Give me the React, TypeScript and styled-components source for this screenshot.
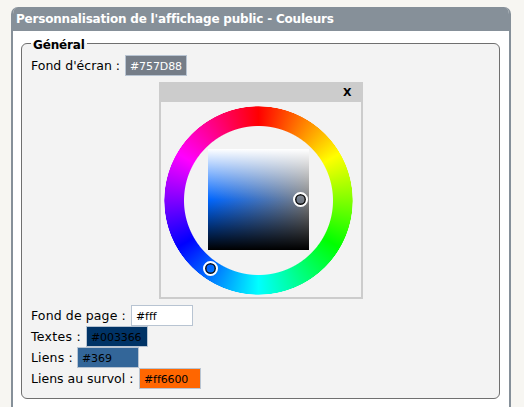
import React from "react";
import styled, { createGlobalStyle } from "styled-components";

const GlobalStyle = createGlobalStyle`
  * { box-sizing: border-box; }
  body {
    margin: 0;
    background: #f7f6f2;
    font-family: "DejaVu Sans", Verdana, sans-serif;
    font-size: 12.5px;
    color: #000;
  }
`;

const Page = styled.main`
  height: 407px;
  padding: 7px 13px 0 11px;
  overflow: hidden;
`;

const Panel = styled.section`
  height: 420px;
  border: 2px solid #869099;
  border-top: 0;
  border-radius: 7px 7px 0 0;
  background: #fff;
  overflow: hidden;
`;

const PanelTitle = styled.h1`
  height: 24px;
  margin: 0;
  padding-left: 3px;
  background: #869099;
  color: #fff;
  font-size: 12px;
  line-height: 25px;
  letter-spacing: -0.2px;
  white-space: nowrap;
`;

const Group = styled.fieldset`
  height: 362px;
  margin: 6px 9px 0 8px;
  padding: 5px 9px 0;
  border: 1px solid #6f6f6f;
  border-radius: 6px;
  background: #f3f3f3;
`;

const Legend = styled.legend`
  height: 13px;
  margin-left: 0;
  padding: 0 2px;
  font-size: 12px;
  font-weight: bold;
  line-height: 16px;
  letter-spacing: -0.15px;
`;

const Field = styled.div`
  display: flex;
  height: 21px;
`;

const Label = styled.label<{ $width: number; $spacing?: number }>`
  width: ${(p) => p.$width}px;
  flex: none;
  line-height: 21px;
  letter-spacing: ${(p) => p.$spacing ?? 0}px;
  white-space: nowrap;
`;

const ColorInput = styled.input<{ $bg: string; $fg?: string }>`
  width: 62px;
  height: 21px;
  margin: 0;
  padding: 1px 4px 0;
  border: 1px solid #b8c4d2;
  border-radius: 0;
  background: ${(p) => p.$bg};
  color: ${(p) => p.$fg ?? "#000"};
  font-family: "DejaVu Sans", Verdana, sans-serif;
  font-size: 11px;
  letter-spacing: -0.1px;
  outline: 0;
`;

const Picker = styled.div`
  width: 204px;
  height: 217px;
  margin: 6px 0 6px 128px;
  border: 2px solid #ccc;
  border-top: 0;
`;

const PickerBar = styled.div`
  display: flex;
  justify-content: flex-end;
  height: 20px;
  padding-right: 10px;
  background: #ccc;
`;

const CloseButton = styled.button`
  width: 8px;
  padding: 0;
  border: 0;
  background: none;
  font: bold 11px/19px "DejaVu Sans", Verdana, sans-serif;
  color: #000;
`;

const Wheel = styled.div`
  position: relative;
  display: grid;
  place-items: center;
  width: 189px;
  height: 189px;
  margin: 4px 0 0 3px;

  &::before {
    content: "";
    position: absolute;
    inset: 0;
    border-radius: 50%;
    background: conic-gradient(#f00, #ff0, #0f0, #0ff, #00f, #f0f, #f00);
    mask: radial-gradient(circle, transparent 74px, #000 75px, #000 93.8px, transparent 94.5px);
  }
`;

const Shade = styled.div`
  width: 101px;
  height: 101px;
  margin-bottom: 2px;
  background:
    linear-gradient(#fff, rgba(255, 255, 255, 0) 50%, rgba(0, 0, 0, 0) 50%, #000),
    linear-gradient(90deg, rgba(128, 128, 128, 0), #808080),
    #0066ff;
`;

const Marker = styled.span<{ $x: number; $y: number }>`
  position: absolute;
  left: ${(p) => p.$x - 7.5}px;
  top: ${(p) => p.$y - 7.5}px;
  width: 15px;
  height: 15px;
  border: 2px solid #fff;
  border-radius: 50%;
  box-shadow: inset 0 0 0 1.5px #111;
`;

export default function App() {
  return (
    <>
      <GlobalStyle />
      <Page>
        <Panel>
          <PanelTitle>Personnalisation de l'affichage public - Couleurs</PanelTitle>
          <Group>
            <Legend>Général</Legend>
            <Field>
              <Label $width={94} htmlFor="screen">Fond d'écran :</Label>
              <ColorInput id="screen" $bg="#757d88" $fg="#fff" defaultValue="#757D88" />
            </Field>
            <Picker>
              <PickerBar>
                <CloseButton type="button">X</CloseButton>
              </PickerBar>
              <Wheel>
                <Shade />
                <Marker $x={46.5} $y={162.5} />
                <Marker $x={136.5} $y={93.5} />
              </Wheel>
            </Picker>
            <Field>
              <Label $width={100} $spacing={0.12} htmlFor="page">Fond de page :</Label>
              <ColorInput id="page" $bg="#fff" defaultValue="#fff" />
            </Field>
            <Field>
              <Label $width={55} $spacing={0.3} htmlFor="text">Textes :</Label>
              <ColorInput id="text" $bg="#003366" defaultValue="#003366" />
            </Field>
            <Field>
              <Label $width={46} $spacing={0.15} htmlFor="links">Liens :</Label>
              <ColorInput id="links" $bg="#336699" defaultValue="#369" />
            </Field>
            <Field>
              <Label $width={108} htmlFor="hover">Liens au survol :</Label>
              <ColorInput id="hover" $bg="#ff6600" defaultValue="#ff6600" />
            </Field>
          </Group>
        </Panel>
      </Page>
    </>
  );
}
